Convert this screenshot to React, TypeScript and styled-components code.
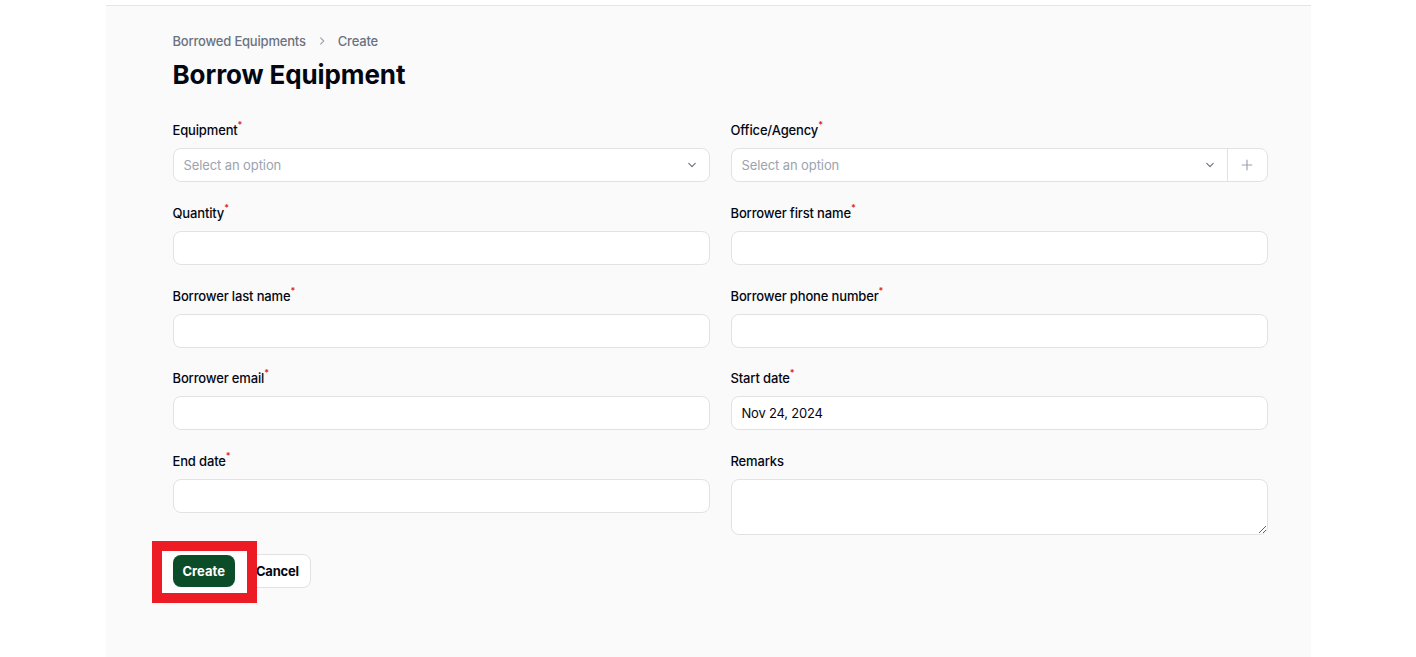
import React from 'react';
import styled, { createGlobalStyle } from 'styled-components';

const GlobalStyle = createGlobalStyle`
  html, body {
    margin: 0;
    padding: 0;
    background: #ffffff;
  }
  body {
    font-family: Inter, 'Noto Sans', 'Liberation Sans', sans-serif;
    color: #030712;
    -webkit-font-smoothing: antialiased;
  }
  * {
    box-sizing: border-box;
  }
`;

type Field = {
  label: string;
  required?: boolean;
  kind: 'select' | 'text' | 'textarea';
  value?: string;
  addon?: boolean;
};

const fields: Array<Field> = [
  { label: 'Equipment', required: true, kind: 'select' },
  { label: 'Office/Agency', required: true, kind: 'select', addon: true },
  { label: 'Quantity', required: true, kind: 'text' },
  { label: 'Borrower first name', required: true, kind: 'text' },
  { label: 'Borrower last name', required: true, kind: 'text' },
  { label: 'Borrower phone number', required: true, kind: 'text' },
  { label: 'Borrower email', required: true, kind: 'text' },
  { label: 'Start date', required: true, kind: 'text', value: 'Nov 24, 2024' },
  { label: 'End date', required: true, kind: 'text' },
  { label: 'Remarks', kind: 'textarea' },
];

const Chevron = () => (
  <svg width="16" height="16" viewBox="0 0 20 20" fill="none">
    <path d="M6 8l4 4 4-4" stroke="#6b7280" strokeWidth="1.5" strokeLinecap="round" strokeLinejoin="round" />
  </svg>
);

const Plus = () => (
  <svg width="16" height="16" viewBox="0 0 20 20" fill="none">
    <path d="M10 4v12M4 10h12" stroke="#9ca3af" strokeWidth="1.5" strokeLinecap="round" />
  </svg>
);

const BreadcrumbChevron = () => (
  <svg width="14" height="14" viewBox="0 0 20 20" fill="none">
    <path d="M8 5.5l4.5 4.5L8 14.5" stroke="#9ca3af" strokeWidth="1.6" strokeLinecap="round" strokeLinejoin="round" />
  </svg>
);

function FormField({ field }: { field: Field }) {
  return (
    <FieldWrap>
      <Label>
        {field.label}
        {field.required && <Required>*</Required>}
      </Label>
      {field.kind === 'textarea' && <TextArea />}
      {field.kind === 'text' && (
        <InputBox>
          <TextInput defaultValue={field.value} />
        </InputBox>
      )}
      {field.kind === 'select' && (
        <InputBox>
          <SelectValue>Select an option</SelectValue>
          <ChevronSlot $withAddon={!!field.addon}><Chevron /></ChevronSlot>
          {field.addon && <Addon><Plus /></Addon>}
        </InputBox>
      )}
    </FieldWrap>
  );
}

export default function App() {
  return (
    <>
      <GlobalStyle />
      <Page>
        <Panel>
          <Breadcrumbs>
            <Crumb>Borrowed Equipments</Crumb>
            <BreadcrumbChevron />
            <Crumb>Create</Crumb>
          </Breadcrumbs>
          <Heading>Borrow Equipment</Heading>

          <FormGrid>
            {fields.map((f) => (
              <FormField key={f.label} field={f} />
            ))}
          </FormGrid>

          <Actions>
            <PrimaryButton>Create</PrimaryButton>
            <SecondaryButton>Cancel</SecondaryButton>
            <Highlight />
          </Actions>
        </Panel>
      </Page>
    </>
  );
}

const Page = styled.div`
  display: flex;
  justify-content: center;
  min-height: 657px;
  padding-top: 5px;
`;

const Panel = styled.main`
  width: 1205px;
  min-height: 652px;
  background: #fafafa;
  border-top: 1px solid #e5e5e5;
  padding: 25px 43px 40px 67px;
`;

const Breadcrumbs = styled.nav`
  display: flex;
  align-items: center;
  gap: 9px;
  height: 20px;
`;

const Crumb = styled.span`
  font-size: 13px;
  font-weight: 500;
  letter-spacing: -0.2px;
  color: #6b7280;
`;

const Heading = styled.h1`
  margin: 8px 0 0;
  font-size: 26px;
  line-height: 32px;
  font-weight: 700;
  letter-spacing: -0.1px;
  color: #030712;
`;

const FormGrid = styled.div`
  display: grid;
  grid-template-columns: 1fr 1fr;
  gap: 20.8px 21px;
  margin-top: 29px;
`;

const FieldWrap = styled.div`
  display: flex;
  flex-direction: column;
  gap: 8px;
`;

const Label = styled.label`
  display: flex;
  align-items: flex-start;
  height: 20px;
  line-height: 20px;
  font-size: 13px;
  font-weight: 500;
  letter-spacing: -0.15px;
  color: #030712;
`;

const Required = styled.sup`
  font-size: 9px;
  line-height: 9px;
  font-weight: 600;
  color: #dc2626;
  margin-left: 0;
  vertical-align: top;
`;

const InputBox = styled.div`
  display: flex;
  align-items: center;
  height: 34px;
  background: #ffffff;
  border: 1px solid #e2e2e4;
  border-radius: 8px;
  overflow: hidden;
`;

const TextInput = styled.input`
  flex: 1;
  height: 100%;
  border: none;
  outline: none;
  background: transparent;
  padding: 0 10px;
  font-family: inherit;
  font-size: 13px;
  letter-spacing: -0.2px;
  color: #030712;
`;

const SelectValue = styled.span`
  flex: 1;
  padding: 0 10px;
  font-size: 13px;
  letter-spacing: -0.1px;
  color: #9ca3af;
`;

const ChevronSlot = styled.span<{ $withAddon: boolean }>`
  display: flex;
  align-items: center;
  padding-right: ${({ $withAddon }) => ($withAddon ? '9px' : '9px')};
`;

const Addon = styled.span`
  display: flex;
  align-items: center;
  justify-content: center;
  width: 40px;
  height: 100%;
  border-left: 1px solid #e2e2e4;
`;

const TextArea = styled.textarea`
  height: 56px;
  resize: vertical;
  background: #ffffff;
  border: 1px solid #e2e2e4;
  border-radius: 8px;
  outline: none;
  font-family: inherit;
  font-size: 13px;
  padding: 6px 11px;
`;

const Actions = styled.div`
  position: relative;
  display: flex;
  align-items: center;
  gap: 8px;
  margin-top: 19px;
`;

const PrimaryButton = styled.button`
  position: relative;
  z-index: 1;
  height: 32px;
  padding: 0 10px;
  border: none;
  border-radius: 8px;
  background: #0b4d28;
  color: #ffffff;
  font-family: inherit;
  font-size: 13px;
  font-weight: 700;
`;

const SecondaryButton = styled.button`
  height: 34px;
  padding: 0 11px 0 12px;
  border: 1px solid #e2e2e4;
  border-radius: 8px;
  background: #ffffff;
  color: #030712;
  font-family: inherit;
  font-size: 13px;
  font-weight: 700;
  letter-spacing: -0.2px;
`;

// annotation box drawn over the Create button
const Highlight = styled.div`
  position: absolute;
  left: -21px;
  top: -13px;
  width: 105px;
  height: 62px;
  border: 10px solid #ed1c24;
  background: #ffffff;
  pointer-events: none;
  z-index: 0;
`;
